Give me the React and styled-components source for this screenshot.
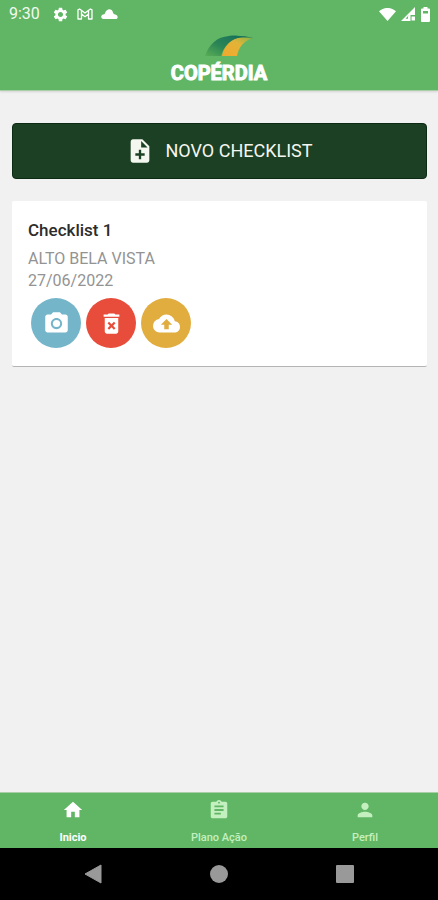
import React from "react";
import styled, { createGlobalStyle } from "styled-components";
import {
  MdNoteAdd,
  MdCameraAlt,
  MdDeleteForever,
  MdBackup,
  MdHome,
  MdAssignment,
  MdPerson,
  MdSettings,
} from "react-icons/md";

const GlobalStyle = createGlobalStyle`
  *, *::before, *::after { box-sizing: border-box; }
  body {
    margin: 0;
    background: #f1f1f1;
    font-family: Roboto, "Liberation Sans", sans-serif;
  }
  button { font: inherit; border: 0; padding: 0; cursor: pointer; }
  svg { display: block; flex: none; }
`;

const Screen = styled.div`
  min-height: 100vh;
  display: flex;
  flex-direction: column;
`;

const Header = styled.header`
  background: #60b664;
  border-bottom: 1px solid #a9cfa8;
  box-shadow: 0 1px 2px rgba(0, 0, 0, 0.12);
`;

const StatusBar = styled.div`
  display: flex;
  align-items: center;
  justify-content: space-between;
  height: 28px;
  padding: 0 8px 0 9px;
  color: #fff;
`;

const StatusGroup = styled.div`
  display: flex;
  align-items: center;
  gap: ${(p) => p.$gap}px;
`;

const Clock = styled.time`
  font-size: 16px;
  line-height: 20px;
  color: #f0faf0;
  margin-right: 4px;
`;

const Brand = styled.div`
  display: flex;
  justify-content: center;
  padding: 7px 0 1px;
`;

const LogoText = styled.text`
  font-family: Roboto, "Liberation Sans", sans-serif;
  font-size: 20px;
  font-weight: 700;
  fill: #fff;
  stroke: #fff;
  stroke-width: 1px;
  stroke-linejoin: round;
`;

const Main = styled.main`
  flex: 1;
  display: flex;
  flex-direction: column;
  gap: 22px;
  padding: 32px 11px 20px 12px;
`;

const NewButton = styled.button`
  display: flex;
  align-items: center;
  justify-content: center;
  gap: 11px;
  height: 56px;
  color: #f4f6f0;
  background: #1c4024;
  border: 1px solid #0c2a14;
  border-radius: 4px;
  font-size: 18px;
  line-height: 24px;
`;

const Card = styled.article`
  padding: 18px 16px;
  background: #fff;
  border-bottom: 1px solid #b4b4b4;
  border-radius: 2px;
`;

const CardTitle = styled.h2`
  margin: 0 0 7px;
  font-size: 17px;
  font-weight: 500;
  line-height: 22px;
  color: #2c2c2c;
`;

const CardLine = styled.p`
  margin: 0;
  font-size: 16px;
  line-height: 22px;
  color: #939393;
`;

const Actions = styled.div`
  display: flex;
  gap: 5px;
  padding: 6px 3px 0;
`;

const RoundButton = styled.button`
  display: grid;
  place-items: center;
  width: 50px;
  height: 50px;
  border-radius: 50%;
  color: #fff;
  background: ${(p) => p.$color};
`;

const TabBar = styled.nav`
  display: grid;
  grid-template-columns: repeat(3, 1fr);
  height: 56px;
  background: #60b664;
  border-top: 1px solid #a9cfa8;
`;

const Tab = styled.a`
  display: flex;
  flex-direction: column;
  align-items: center;
  gap: 10px;
  padding-top: 6px;
  color: ${(p) => (p.$active ? "#fff" : "#c4f0c0")};
  font-size: 11px;
  font-weight: ${(p) => (p.$active ? 700 : 500)};
  line-height: 14px;
  text-decoration: none;
`;

const SystemBar = styled.div`
  display: flex;
  justify-content: center;
  align-items: center;
  gap: 72px;
  height: 52px;
  background: #000;
`;

const SystemButton = styled.button`
  display: grid;
  place-items: center;
  width: 54px;
  height: 52px;
  color: #999;
  background: transparent;
`;

function GmailIcon() {
  return (
    <svg width="16" height="12" viewBox="0 0 16 12" fill="none" stroke="currentColor" strokeWidth="1.3" strokeLinejoin="round">
      <path d="M1 1.8 2.6 1 8 5 13.4 1 15 1.8V11H11.5V6L8 8.7 4.5 6v5H1z" />
      <path d="M4.5 2.5V6M11.5 2.5V6" />
    </svg>
  );
}

function CloudIcon() {
  return (
    <svg width="17" height="10" viewBox="0 0 17 10" fill="currentColor">
      <path d="M2.5 10C-.5 10-.5 6 2.2 5.5 3.5 5.3 3.8 5 4.2 3.8 5.5-.8 11-1 12 3.5c.3 1.3.8 1.6 2.3 2 3 .8 3.2 4.500.2 4.500z" />
    </svg>
  );
}

function WifiIcon() {
  return (
    <svg width="17" height="13" viewBox="0 0 17 13" fill="currentColor">
      <path d="M8.5 13 0 3.2C5-1.1 12-1.1 17 3.2z" />
    </svg>
  );
}

function SignalIcon() {
  return (
    <svg width="15" height="14" viewBox="0 0 15 14" fill="currentColor">
      <path fillRule="evenodd" d="M14 0v8h-4.500v6H0zM8.500 7.500 4.500 11.800H7V9.500z" />
      <path d="M10.500 9.500H14V13.500h-3.500z" />
    </svg>
  );
}

function BatteryIcon() {
  return (
    <svg width="9" height="15" viewBox="0 0 9 15" fill="currentColor">
      <path fillRule="evenodd" d="M2.500 0h4v1.500H8a1 1 0 0 1 1 1V14a1 1 0 0 1-1 1H1a1 1 0 0 1-1-1V2.500a1 1 0 0 1 1-1h1.500zM2 4v2.500h5V4z" />
    </svg>
  );
}

function Logo() {
  return (
    <svg width="112" height="54" viewBox="0 0 112 54" role="img" aria-label="Copérdia">
      <defs>
        <linearGradient id="leaf" x1="0" y1="1" x2="1" y2="0">
          <stop offset="0" stopColor="#5aae55" />
          <stop offset="0.45" stopColor="#2b8555" />
          <stop offset="1" stopColor="#16705c" />
        </linearGradient>
        <linearGradient id="stem" x1="0" y1="1" x2="1" y2="0">
          <stop offset="0" stopColor="#f0aa2c" />
          <stop offset="0.6" stopColor="#e2b338" />
          <stop offset="1" stopColor="#7fb64b" />
        </linearGradient>
      </defs>
      <path d="M42 21C46 9 54 2 66 1c5-.5 11 0 14 1-10 2-15 6-19 12-2 3-2 5-3 7z" fill="url(#leaf)" />
      <path d="M66 1c10-.5 17 0 24 2-4 1-7 2-10 4-3-4-8-5-14-6z" fill="#17725c" />
      <path d="M59 21C61 11 68 3 79 2.500c4 0 8 0 11 .5-9 3-14 8-16 18z" fill="url(#stem)" />
      <LogoText x="56" y="45" textAnchor="middle">COPÉRDIA</LogoText>
    </svg>
  );
}

const actions = [
  { label: "Fotografar", color: "#74b5ca", Icon: MdCameraAlt, size: 27 },
  { label: "Excluir", color: "#e84c3a", Icon: MdDeleteForever, size: 27 },
  { label: "Enviar", color: "#e1ad3f", Icon: MdBackup, size: 27 },
];

const tabs = [
  { label: "Inicio", Icon: MdHome, active: true },
  { label: "Plano Ação", Icon: MdAssignment },
  { label: "Perfil", Icon: MdPerson },
];

export default function App() {
  return (
    <Screen>
      <GlobalStyle />
      <Header>
        <StatusBar>
          <StatusGroup $gap={8}>
            <Clock>9:30</Clock>
            <MdSettings size={17} />
            <GmailIcon />
            <CloudIcon />
          </StatusGroup>
          <StatusGroup $gap={5}>
            <WifiIcon />
            <SignalIcon />
            <BatteryIcon />
          </StatusGroup>
        </StatusBar>
        <Brand>
          <Logo />
        </Brand>
      </Header>
      <Main>
        <NewButton type="button">
          <MdNoteAdd size={28} />
          NOVO CHECKLIST
        </NewButton>
        <Card>
          <CardTitle>Checklist 1</CardTitle>
          <CardLine>ALTO BELA VISTA</CardLine>
          <CardLine>27/06/2022</CardLine>
          <Actions>
            {actions.map(({ label, color, Icon, size }) => (
              <RoundButton key={label} type="button" aria-label={label} $color={color}>
                <Icon size={size} />
              </RoundButton>
            ))}
          </Actions>
        </Card>
      </Main>
      <TabBar>
        {tabs.map(({ label, Icon, active }) => (
          <Tab key={label} href="#" $active={active} aria-current={active ? "page" : undefined}>
            <Icon size={22} />
            {label}
          </Tab>
        ))}
      </TabBar>
      <SystemBar>
        <SystemButton type="button" aria-label="Voltar">
          <svg width="18" height="20" viewBox="0 0 18 20" fill="currentColor">
            <path d="M17 1v18L1 10z" stroke="currentColor" strokeLinejoin="round" />
          </svg>
        </SystemButton>
        <SystemButton type="button" aria-label="Tela inicial">
          <svg width="18" height="18" viewBox="0 0 18 18" fill="currentColor">
            <circle cx="9" cy="9" r="9" />
          </svg>
        </SystemButton>
        <SystemButton type="button" aria-label="Recentes">
          <svg width="18" height="18" viewBox="0 0 18 18" fill="currentColor">
            <rect width="18" height="18" rx="1" />
          </svg>
        </SystemButton>
      </SystemBar>
    </Screen>
  );
}
